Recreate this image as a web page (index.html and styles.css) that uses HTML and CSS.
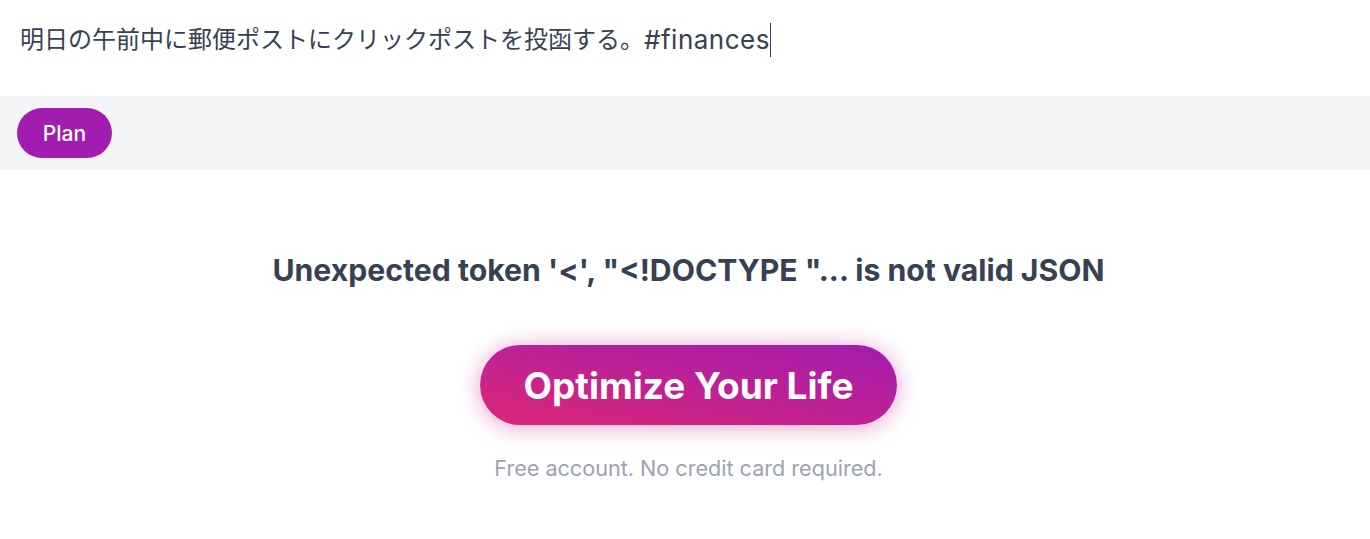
FILE: index.html
```html
<!DOCTYPE html>
<html lang="ja">
<head>
<meta charset="utf-8">
<link rel="stylesheet" href="styles.css">
</head>
<body>
<div class="page">
  <div class="input-area">
    <div class="input-text">明日の午前中に郵便ポストにクリックポストを投函する。<span class="latin">#finances</span><span class="caret"></span></div>
  </div>
  <div class="toolbar">
    <button class="plan-btn">Plan</button>
  </div>
  <div class="result">
    <h2 class="error">Unexpected token '&lt;', "&lt;!DOCTYPE "... is not valid JSON</h2>
    <button class="cta">Optimize Your Life</button>
    <p class="note">Free account. No credit card required.</p>
  </div>
</div>
</body>
</html>
```
FILE: styles.css
```css
* { box-sizing: border-box; }
html, body { margin: 0; padding: 0; background: #ffffff; }
body { font-family: Inter, "Noto Sans CJK JP", sans-serif; }
.page { width: 1370px; }
.input-area {
  height: 96px;
  padding: 22px 20px 0 20px;
}
.input-text {
  font-family: Inter, "Noto Sans CJK JP", sans-serif;
  font-size: 24px;
  line-height: 36px;
  color: #374151;
  display: flex;
  align-items: center;
  white-space: nowrap;
}
.latin {
  font-size: 26px;
  letter-spacing: 0.5px;
}
.caret {
  display: inline-block;
  width: 1px;
  height: 34px;
  background: #374151;
  margin-left: 0;
}
.toolbar {
  height: 74px;
  background: #f3f4f6;
  padding: 12px 17px;
  display: flex;
  align-items: flex-start;
}
.plan-btn {
  width: 95px;
  height: 50px;
  border: none;
  border-radius: 25px;
  background: #a21caf;
  color: #ffffff;
  font-family: Inter, sans-serif;
  font-size: 21px;
  font-weight: 500;
  padding: 0;
}
.result {
  display: flex;
  flex-direction: column;
  align-items: center;
  padding-top: 80px;
  padding-left: 7px;
}
.error {
  margin: 0;
  font-size: 30.2px;
  font-weight: 700;
  color: #374151;
  line-height: 40px;
}
.cta {
  margin-top: 55px;
  width: 417px;
  height: 80px;
  border: none;
  border-radius: 40px;
  background: linear-gradient(to top right, #db2777, #a21caf);
  color: #ffffff;
  font-family: Inter, sans-serif;
  font-size: 37px;
  font-weight: 700;
  box-shadow: 0 4px 24px rgba(219, 39, 119, 0.25), 0 0 20px rgba(162, 28, 175, 0.2);
  padding: 0;
}
.note {
  margin: 29px 0 0 0;
  font-size: 21.6px;
  line-height: 28px;
  color: #9ca3af;
}
```
